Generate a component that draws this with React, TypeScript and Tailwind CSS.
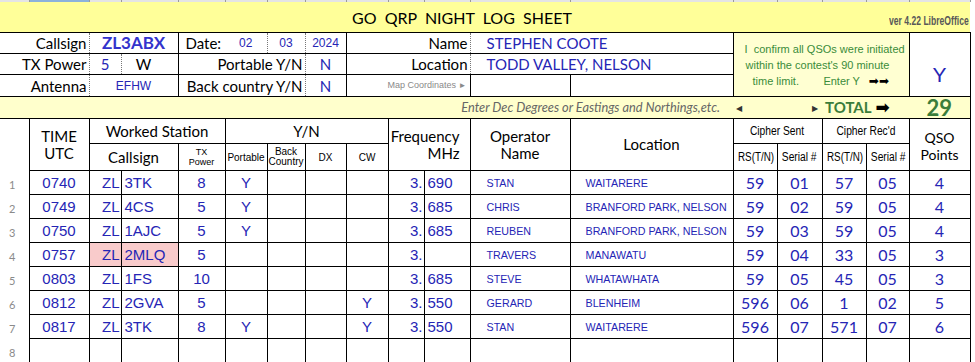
const BLUE = "text-[#2525b5]";
const ARIAL = "font-['Liberation_Sans',Arial,sans-serif]";
const NARROW = "font-['Liberation_Sans_Narrow','Liberation_Sans',Arial,sans-serif]";
const CELL = "border border-black p-0";
const SQUEEZE = "inline-block scale-x-[0.82] whitespace-nowrap";

const ROWS = [
  { n: 1, time: "0740", call: "3TK", pwr: "8", port: "Y", cw: "", freq: "690", op: "STAN", loc: "WAITARERE", rs1: "59", s1: "01", rs2: "57", s2: "05", pts: "4" },
  { n: 2, time: "0749", call: "4CS", pwr: "5", port: "Y", cw: "", freq: "685", op: "CHRIS", loc: "BRANFORD PARK, NELSON", rs1: "59", s1: "02", rs2: "59", s2: "05", pts: "4" },
  { n: 3, time: "0750", call: "1AJC", pwr: "5", port: "Y", cw: "", freq: "685", op: "REUBEN", loc: "BRANFORD PARK, NELSON", rs1: "59", s1: "03", rs2: "59", s2: "05", pts: "4" },
  { n: 4, time: "0757", call: "2MLQ", pwr: "5", port: "", cw: "", freq: "", op: "TRAVERS", loc: "MANAWATU", rs1: "59", s1: "04", rs2: "33", s2: "05", pts: "3", hl: true },
  { n: 5, time: "0803", call: "1FS", pwr: "10", port: "", cw: "", freq: "685", op: "STEVE", loc: "WHATAWHATA", rs1: "59", s1: "05", rs2: "45", s2: "05", pts: "3" },
  { n: 6, time: "0812", call: "2GVA", pwr: "5", port: "", cw: "Y", freq: "550", op: "GERARD", loc: "BLENHEIM", rs1: "596", s1: "06", rs2: "1", s2: "02", pts: "5" },
  { n: 7, time: "0817", call: "3TK", pwr: "8", port: "Y", cw: "Y", freq: "550", op: "STAN", loc: "WAITARERE", rs1: "596", s1: "07", rs2: "571", s2: "07", pts: "6" },
];

const WIDTHS = [29, 60, 32, 57, 47, 42, 38, 41, 42, 36, 46, 100, 163, 44, 45, 44, 43, 61];

function Cols() {
  return (
    <colgroup>
      <col className="w-[29px]" />
      <col className="w-[60px]" />
      <col className="w-[32px]" />
      <col className="w-[57px]" />
      <col className="w-[47px]" />
      <col className="w-[42px]" />
      <col className="w-[38px]" />
      <col className="w-[41px]" />
      <col className="w-[42px]" />
      <col className="w-[36px]" />
      <col className="w-[46px]" />
      <col className="w-[100px]" />
      <col className="w-[163px]" />
      <col className="w-[44px]" />
      <col className="w-[45px]" />
      <col className="w-[44px]" />
      <col className="w-[43px]" />
      <col className="w-[61px]" />
    </colgroup>
  );
}

export default function App() {
  return (
    <div className="w-[975px] h-[362px] overflow-hidden bg-white font-['Lato',sans-serif] text-black">
      <table className="table-fixed w-[970px] border-collapse">
        <Cols />
        <tbody>
          {/* sheet column header strip */}
          <tr className="h-[2px]">
            {WIDTHS.map((w, i) => (
              <td
                key={i}
                className={
                  i === 1
                    ? "p-0 h-[2px] bg-[#8cb2dc] border-r border-[#9a9a9a]"
                    : "p-0 h-[2px] bg-[#e4e4e4] border-r border-[#9a9a9a]"
                }
              />
            ))}
          </tr>

          {/* title */}
          <tr className="h-[30px]">
            <td colSpan={18} className="p-0 bg-[#ffff99] border-b border-black">
              <div className="flex items-center h-[30px]">
                <div className="w-[352px]" />
                <div className="text-[16px] leading-none whitespace-pre pt-[2px]">
                  GO  QRP  NIGHT  LOG  SHEET
                </div>
                <div className={`flex-1 text-right self-end pb-[5px] pr-[1px] text-[13px] leading-none font-bold text-[#585858] ${NARROW}`}>
                  <span className="inline-block scale-x-[0.66] origin-right whitespace-nowrap">ver 4.22 LibreOffice</span>
                </div>
              </div>
            </td>
          </tr>

          {/* callsign row */}
          <tr className="h-[21px] text-[15px] leading-[18px]">
            <td colSpan={2} className="p-0 pr-[2px] text-right border-b border-black border-r border-r-[#777] [border-right-style:dotted]">
              Callsign
            </td>
            <td colSpan={2} className="p-0 text-center border-b border-r border-black font-bold text-[17px] text-[#3333cc]">
              ZL3ABX
            </td>
            <td className="p-0 pl-[7px] text-left border-b border-black">Date:</td>
            <td className={`p-0 text-center border-b border-black border-r border-r-[#777] [border-right-style:dotted] text-[12px] ${ARIAL} ${BLUE}`}>
              02
            </td>
            <td className={`p-0 text-center border-b border-black border-r border-r-[#777] [border-right-style:dotted] text-[12px] ${ARIAL} ${BLUE}`}>
              03
            </td>
            <td className={`p-0 text-center border-b border-r border-black text-[12px] ${ARIAL} ${BLUE}`}>
              2024
            </td>
            <td colSpan={3} className="p-0 pr-[2px] text-right border-b border-black border-r border-r-[#777] [border-right-style:dotted]">
              Name
            </td>
            <td colSpan={2} className={`p-0 pl-[16px] text-left border-b border-black ${BLUE}`}>
              STEPHEN COOTE
            </td>
            <td colSpan={4} rowSpan={3} className={`p-0 border-l border-b border-r border-black bg-[#ffffd2] text-[#3a8c3a] text-[11px] leading-[16px] ${NARROW}`}>
              <div className="pl-[11px] whitespace-pre">I  confirm all QSOs were initiated</div>
              <div className="pl-[12px] whitespace-pre">within the contest's 90 minute</div>
              <div className="pl-[19px] whitespace-pre">
                time limit.        Enter Y   <span className="text-black text-[12px] leading-none font-['DejaVu_Sans',sans-serif]">➡➡</span>
              </div>
            </td>
            <td rowSpan={3} className={`p-0 text-center border-b border-r border-black text-[21px] pt-[20px] ${ARIAL} ${BLUE}`}>
              Y
            </td>
          </tr>

          {/* tx power row */}
          <tr className="h-[21px] text-[15px] leading-[18px]">
            <td colSpan={2} className="p-0 pr-[2px] text-right border-b border-black border-r border-r-[#777] [border-right-style:dotted]">
              TX Power
            </td>
            <td className={`p-0 text-center border-b border-black border-r border-r-[#777] [border-right-style:dotted] ${BLUE}`}>5</td>
            <td className="p-0 pr-[12px] text-center border-b border-r border-black">W</td>
            <td colSpan={3} className="p-0 pr-[2px] text-right border-b border-black border-r border-r-[#777] [border-right-style:dotted]">
              Portable Y/N
            </td>
            <td className={`p-0 text-center border-b border-r border-black ${BLUE}`}>N</td>
            <td colSpan={3} className="p-0 pr-[2px] text-right border-b border-black border-r border-r-[#777] [border-right-style:dotted]">
              Location
            </td>
            <td colSpan={2} className={`p-0 pl-[16px] text-left border-b border-black ${BLUE}`}>
              TODD VALLEY, NELSON
            </td>
          </tr>

          {/* antenna row */}
          <tr className="h-[22px] text-[15px] leading-[18px]">
            <td colSpan={2} className="p-0 pr-[2px] text-right border-b border-black border-r border-r-[#777] [border-right-style:dotted]">
              Antenna
            </td>
            <td colSpan={2} className={`p-0 text-center border-b border-r border-black text-[12px] ${ARIAL} ${BLUE}`}>
              EFHW
            </td>
            <td colSpan={3} className="p-0 pr-[2px] text-right border-b border-black border-r border-r-[#777] [border-right-style:dotted]">
              Back country Y/N
            </td>
            <td className={`p-0 text-center border-b border-r border-black ${BLUE}`}>N</td>
            <td colSpan={3} className={`p-0 pr-[3px] text-right border-b border-r border-black text-[9px] text-[#8a8a8a] ${ARIAL}`}>
              Map Coordinates <span className="text-[8px]">►</span>
            </td>
            <td className="p-0 border-b border-r border-black" />
            <td className="p-0 border-b border-black" />
          </tr>

          {/* coordinates / total band */}
          <tr className="h-[22px]">
            <td colSpan={17} className="p-0 bg-[#ffffcc] border-b border-black">
              <div className="flex items-center h-[21px]">
                <div className="w-[733px] pr-[13px] text-right italic text-[12.8px] text-[#666]">
                  Enter Dec Degrees or Eastings and Northings,etc.
                </div>
                <div className="w-[89px] flex justify-between pl-[3px] pr-[4px] text-[8px] text-[#333]">
                  <span>◀</span>
                  <span>▶</span>
                </div>
                <div className="w-[87px] pl-[3px] flex items-center gap-[4px] text-[15px] font-bold text-[#3b7d3b]">
                  TOTAL
                  <span className="text-black text-[17px] leading-none font-['DejaVu_Sans',sans-serif]">➡</span>
                </div>
              </div>
            </td>
            <td className="p-0 bg-[#ffffcc] border-b border-r border-black text-center text-[22px] font-bold leading-[20px] text-[#3b7d3b]">
              29
            </td>
          </tr>

          {/* table header */}
          <tr className="h-[25px] text-[15px] leading-[17px]">
            <td rowSpan={2} className="p-0" />
            <td rowSpan={2} className={`${CELL} text-center`}>
              TIME
              <br />
              UTC
            </td>
            <td colSpan={3} className={`${CELL} text-center`}>Worked Station</td>
            <td colSpan={4} className={`${CELL} text-center`}>Y/N</td>
            <td colSpan={2} rowSpan={2} className={`${CELL} text-right pr-[10px]`}>
              Frequency
              <br />
              MHz
            </td>
            <td rowSpan={2} className={`${CELL} text-center`}>
              Operator
              <br />
              Name
            </td>
            <td rowSpan={2} className={`${CELL} text-center`}>Location</td>
            <td colSpan={2} className={`${CELL} text-center text-[12.5px] ${NARROW}`}>
              <span className={SQUEEZE}>Cipher Sent</span>
            </td>
            <td colSpan={2} className={`${CELL} text-center text-[12.5px] ${NARROW}`}>
              <span className={SQUEEZE}>Cipher Rec'd</span>
            </td>
            <td rowSpan={2} className={`${CELL} text-center text-[14px] pt-[2px]`}>
              QSO
              <br />
              Points
            </td>
          </tr>
          <tr className="h-[27px] text-[15px] leading-[17px]">
            <td colSpan={2} className={`${CELL} text-center`}>Callsign</td>
            <td className={`${CELL} text-center text-[9px] leading-[10px] ${NARROW}`}>
              TX
              <br />
              Power
            </td>
            <td className={`${CELL} text-center text-[10px] ${NARROW}`}>Portable</td>
            <td className={`${CELL} text-center text-[10px] leading-[10px] ${NARROW}`}>
              Back
              <br />
              Country
            </td>
            <td className={`${CELL} text-center text-[10px] ${NARROW}`}>DX</td>
            <td className={`${CELL} text-center text-[10px] ${NARROW}`}>CW</td>
            <td className={`${CELL} text-center text-[12px] ${NARROW}`}>
              <span className={SQUEEZE}>RS(T/N)</span>
            </td>
            <td className={`${CELL} text-center text-[12.5px] ${NARROW}`}>
              <span className={SQUEEZE}>Serial #</span>
            </td>
            <td className={`${CELL} text-center text-[12px] ${NARROW}`}>
              <span className={SQUEEZE}>RS(T/N)</span>
            </td>
            <td className={`${CELL} text-center text-[12.5px] ${NARROW}`}>
              <span className={SQUEEZE}>Serial #</span>
            </td>
          </tr>

          {/* log rows */}
          {ROWS.map((r) => (
            <tr key={r.n} className={`h-[24px] text-[15px] leading-[18px] ${BLUE}`}>
              <td className="p-0 pl-[9px] pt-[5px] text-left text-[11px] text-[#8a8a8a]">{r.n}</td>
              <td className={`${CELL} text-center ${ARIAL}`}>{r.time}</td>
              <td className={`${CELL} text-right pr-[1px] ${ARIAL} ${r.hl ? "bg-[#f9cbcb]" : ""}`}>ZL</td>
              <td className={`${CELL} text-left pl-[3px] ${ARIAL} ${r.hl ? "bg-[#f9cbcb]" : ""}`}>{r.call}</td>
              <td className={`${CELL} text-center ${ARIAL}`}>{r.pwr}</td>
              <td className={`${CELL} text-center ${ARIAL}`}>{r.port}</td>
              <td className={CELL} />
              <td className={CELL} />
              <td className={`${CELL} text-center ${ARIAL}`}>{r.cw}</td>
              <td className={`${CELL} text-right pr-[1px] ${ARIAL}`}>3.</td>
              <td className={`${CELL} text-left pl-[3px] ${ARIAL}`}>{r.freq}</td>
              <td className={`${CELL} text-left pl-[16px] text-[10.7px] ${ARIAL}`}>{r.op}</td>
              <td className={`${CELL} text-left pl-[15px] text-[10.7px] whitespace-nowrap ${ARIAL}`}>{r.loc}</td>
              <td className={`${CELL} text-center text-[16px]`}>{r.rs1}</td>
              <td className={`${CELL} text-center text-[16px]`}>{r.s1}</td>
              <td className={`${CELL} text-center text-[16px]`}>{r.rs2}</td>
              <td className={`${CELL} text-center text-[16px]`}>{r.s2}</td>
              <td className={`${CELL} text-center text-[16px]`}>{r.pts}</td>
            </tr>
          ))}
          <tr className="h-[24px] text-[15px] leading-[18px]">
            <td className="p-0 pl-[9px] pt-[5px] text-left text-[11px] text-[#8a8a8a]">8</td>
            {WIDTHS.slice(1).map((w, i) => (
              <td key={i} className={CELL} />
            ))}
          </tr>
        </tbody>
      </table>
    </div>
  );
}
